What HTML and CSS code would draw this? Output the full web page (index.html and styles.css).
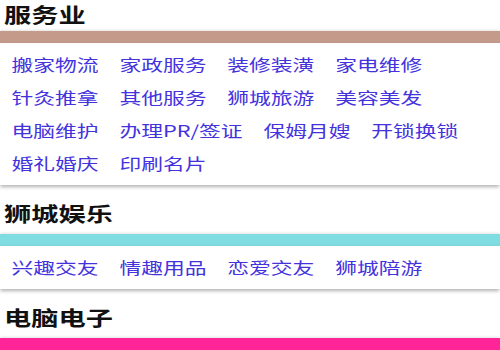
FILE: index.html
```html
<!DOCTYPE html>
<html lang="zh">
<head>
<meta charset="utf-8">
<title>分类</title>
<link rel="stylesheet" href="styles.css">
</head>
<body>
<div class="page">
  <section class="cat cat-first">
    <h2 class="cat-title">服务业</h2>
    <div class="cat-bar bar-brown"></div>
    <ul class="cat-links">
      <li><a href="#">搬家物流</a></li>
      <li><a href="#">家政服务</a></li>
      <li><a href="#">装修装潢</a></li>
      <li><a href="#">家电维修</a></li>
      <li><a href="#">针灸推拿</a></li>
      <li><a href="#">其他服务</a></li>
      <li><a href="#">狮城旅游</a></li>
      <li><a href="#">美容美发</a></li>
      <li><a href="#">电脑维护</a></li>
      <li><a href="#">办理PR/签证</a></li>
      <li><a href="#">保姆月嫂</a></li>
      <li><a href="#">开锁换锁</a></li>
      <li><a href="#">婚礼婚庆</a></li>
      <li><a href="#">印刷名片</a></li>
    </ul>
  </section>
  <section class="cat">
    <h2 class="cat-title">狮城娱乐</h2>
    <div class="cat-bar bar-cyan"></div>
    <ul class="cat-links">
      <li><a href="#">兴趣交友</a></li>
      <li><a href="#">情趣用品</a></li>
      <li><a href="#">恋爱交友</a></li>
      <li><a href="#">狮城陪游</a></li>
    </ul>
  </section>
  <section class="cat">
    <h2 class="cat-title">电脑电子</h2>
    <div class="cat-bar bar-pink"></div>
  </section>
</div>
</body>
</html>
```
FILE: styles.css
```css
html, body {
  margin: 0;
  padding: 0;
  background: #fff;
}
body {
  width: 500px;
  height: 350px;
  overflow: hidden;
}
.page {
  width: 367.65px;
  transform: scaleX(1.36);
  transform-origin: 0 0;
  font-family: "Noto Sans CJK SC", "Microsoft YaHei", sans-serif;
}
.cat {
  background: #fff;
}
.cat-title {
  margin: 0;
  padding: 15px 0 6px 3px;
  font-size: 20px;
  line-height: 28px;
  font-weight: 700;
  color: #111;
}
.cat-first .cat-title {
  padding-top: 0;
  padding-bottom: 2px;
  line-height: 29px;
}
.cat-bar {
  height: 12px;
  box-shadow: 0 -1px 2px rgba(0, 0, 0, 0.12);
}
.bar-brown { background: #c49a8b; }
.bar-cyan { background: #7fdce1; }
.bar-pink { background: #ff2598; }
.cat-links {
  list-style: none;
  margin: 0;
  padding: 5px 0 5px 8.5px;
  display: flex;
  flex-wrap: wrap;
  column-gap: 15.3px;
  font-size: 16px;
  line-height: 33px;
  box-shadow: 0 2px 3px rgba(0, 0, 0, 0.3);
  position: relative;
}
.cat-links a {
  color: #4433dd;
  text-decoration: none;
}
```
